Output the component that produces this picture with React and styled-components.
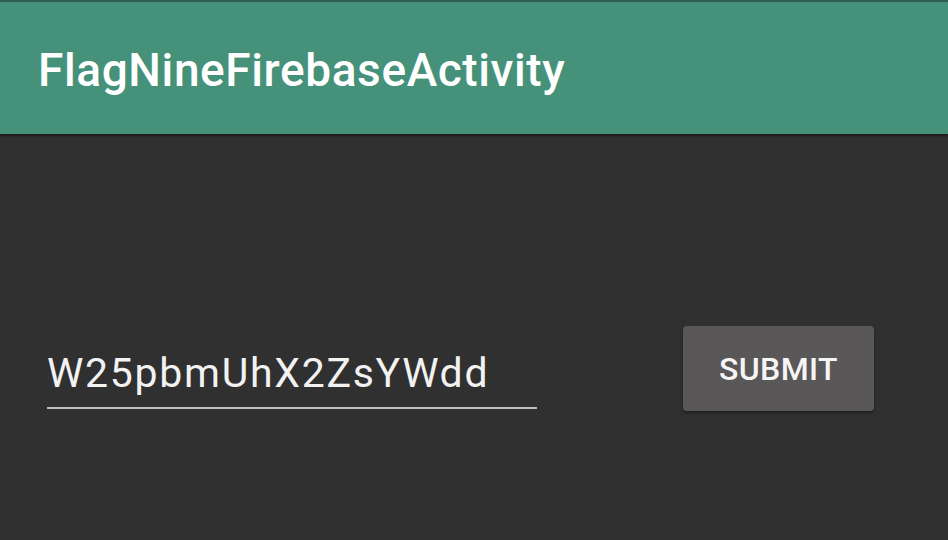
import React from "react";
import styled, { createGlobalStyle } from "styled-components";

const Global = createGlobalStyle`
  html, body { margin: 0; padding: 0; background: #303030; }
  body { font-family: Roboto, "Noto Sans", sans-serif; }
`;

const Screen = styled.div`
  width: 948px;
  height: 540px;
  background: #303030;
  display: flex;
  flex-direction: column;
  overflow: hidden;
`;

const StatusEdge = styled.div`
  height: 2px;
  background: #2f5e50;
`;

const AppBar = styled.header`
  height: 132px;
  background: #45917a;
  display: flex;
  align-items: center;
  padding-left: 38px;
  box-shadow: 0 2px 2px rgba(0, 0, 0, 0.45);
  position: relative;
  z-index: 1;
`;

const Title = styled.h1`
  margin: 4px 0 0 0;
  font-family: Roboto, sans-serif;
  font-weight: 500;
  font-size: 46px;
  color: #ffffff;
  letter-spacing: 0.6px;
`;

const Content = styled.main`
  flex: 1;
  display: flex;
  align-items: flex-start;
  padding: 192px 0 0 47px;
`;

const Field = styled.div`
  width: 490px;
  border-bottom: 2px solid #bdbdbd;
  padding-bottom: 10px;
  margin-top: 23px;
`;

const FieldText = styled.span`
  font-family: Roboto, sans-serif;
  font-size: 41px;
  letter-spacing: 1.7px;
  color: #f2f2f2;
  line-height: 48px;
  display: block;
`;

const Button = styled.button`
  margin-left: 146px;
  width: 191px;
  height: 85px;
  border: none;
  border-radius: 4px;
  background: #5a5759;
  color: #f5f5f5;
  font-family: Roboto, sans-serif;
  font-weight: 500;
  font-size: 32px;
  letter-spacing: 0.4px;
  box-shadow: 0 2px 3px rgba(0, 0, 0, 0.35);
  cursor: pointer;
`;

export default function App() {
  return (
    <>
      <Global />
      <Screen>
        <StatusEdge />
        <AppBar>
          <Title>FlagNineFirebaseActivity</Title>
        </AppBar>
        <Content>
          <Field>
            <FieldText>W25pbmUhX2ZsYWdd</FieldText>
          </Field>
          <Button>SUBMIT</Button>
        </Content>
      </Screen>
    </>
  );
}
